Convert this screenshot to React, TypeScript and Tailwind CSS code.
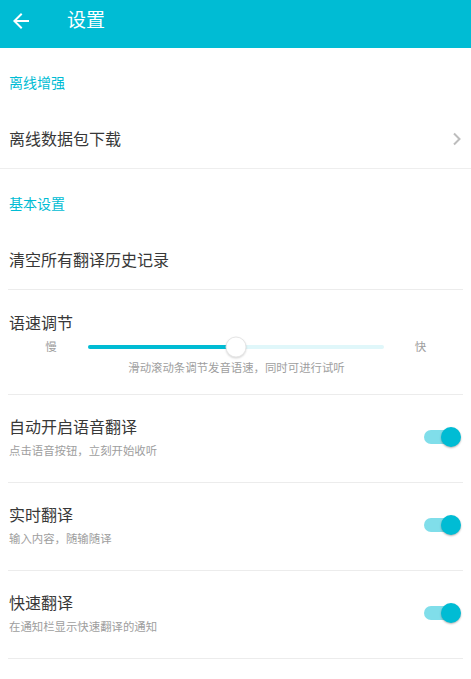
const font = { fontFamily: '"Noto Sans CJK SC", "Noto Sans", sans-serif' };

function Toggle() {
  return (
    <div className="relative w-[37px] h-[20px] flex items-center">
      <div className="w-[34px] h-[14px] rounded-full bg-[#80deea]"></div>
      <div className="absolute right-0 top-0 w-[20px] h-[20px] rounded-full bg-[#00bcd4] shadow-[0_1px_2px_rgba(0,0,0,0.3)]"></div>
    </div>
  );
}

function SectionHeader({ label }: { label: string }) {
  return (
    <div className="h-[61px] pt-[24px] px-[9px]">
      <div className="text-[14px] leading-[20px] text-[#00bcd4]">{label}</div>
    </div>
  );
}

function ToggleRow({ title, desc }: { title: string; desc: string }) {
  return (
    <div className="mx-[8px] border-b border-[#ececec]">
      <div className="flex items-center justify-between pt-[20px] pb-[24px] pl-[1px] pr-[2px]">
        <div>
          <div className="text-[16px] leading-[22px] text-[#383838]">{title}</div>
          <div className="mt-[5px] text-[11.4px] leading-[16px] text-[#9e9e9e]">{desc}</div>
        </div>
        <Toggle />
      </div>
    </div>
  );
}

export default function App() {
  const speed = 50;

  return (
    <div className="w-[471px] h-[679px] bg-white overflow-hidden" style={font}>
      {/* toolbar */}
      <div className="h-[48px] bg-[#00bcd4] flex items-center">
        <svg className="ml-[9px] mt-[-6px]" width="24" height="24" viewBox="0 0 24 24" fill="#fff">
          <path d="M20 11H7.83l5.59-5.59L12 4l-8 8 8 8 1.41-1.41L7.83 13H20v-2z" />
        </svg>
        <div className="ml-[34px] mt-[-10px] text-[19px] leading-[26px] text-white">设置</div>
      </div>

      <SectionHeader label="离线增强" />

      <div className="h-[60px] flex items-center justify-between pl-[9px] pr-[9px] border-b border-[#eeeeee]">
        <div className="text-[16px] leading-[22px] text-[#383838] mt-[-2px]">离线数据包下载</div>
        <svg width="10" height="14" viewBox="0 0 10 14" fill="none" stroke="#bdbdbd" strokeWidth="2">
          <path d="M2 1.5l5.5 5.5L2 12.5" />
        </svg>
      </div>

      <SectionHeader label="基本设置" />

      <div className="mx-[8px] border-b border-[#ececec]">
        <div className="h-[59px] flex items-center pl-[1px] pb-[2px]">
          <div className="text-[16px] leading-[22px] text-[#383838]">清空所有翻译历史记录</div>
        </div>
      </div>

      {/* speech speed */}
      <div className="mx-[8px] border-b border-[#ececec]">
        <div className="pt-[21px] pb-[19px] pl-[1px]">
          <div className="text-[16px] leading-[22px] text-[#383838]">语速调节</div>
          <div className="mt-[4px] h-[20px] flex items-center">
            <div className="w-[79px] text-center text-[11.5px] text-[#9e9e9e] pl-[5px]">慢</div>
            <div className="relative w-[296px] h-[4px] rounded-full bg-[#e0f7fa]">
              <div className="h-full rounded-full bg-[#00bcd4]" style={{ width: `${speed}%` }}></div>
              <div
                className="absolute top-1/2 w-[21px] h-[21px] -translate-x-1/2 -translate-y-1/2 rounded-full bg-white border border-[#e6e6e6] shadow-[0_1px_2px_rgba(0,0,0,0.15)]"
                style={{ left: `${speed}%` }}
              ></div>
            </div>
            <div className="flex-1 text-center text-[11.5px] text-[#9e9e9e] pr-[6px]">快</div>
          </div>
          <div className="mt-[2px] text-center text-[11.4px] leading-[16px] text-[#9e9e9e] pl-[1px]">
            滑动滚动条调节发音语速，同时可进行试听
          </div>
        </div>
      </div>

      <ToggleRow title="自动开启语音翻译" desc="点击语音按钮，立刻开始收听" />
      <ToggleRow title="实时翻译" desc="输入内容，随输随译" />
      <ToggleRow title="快速翻译" desc="在通知栏显示快速翻译的通知" />
    </div>
  );
}
